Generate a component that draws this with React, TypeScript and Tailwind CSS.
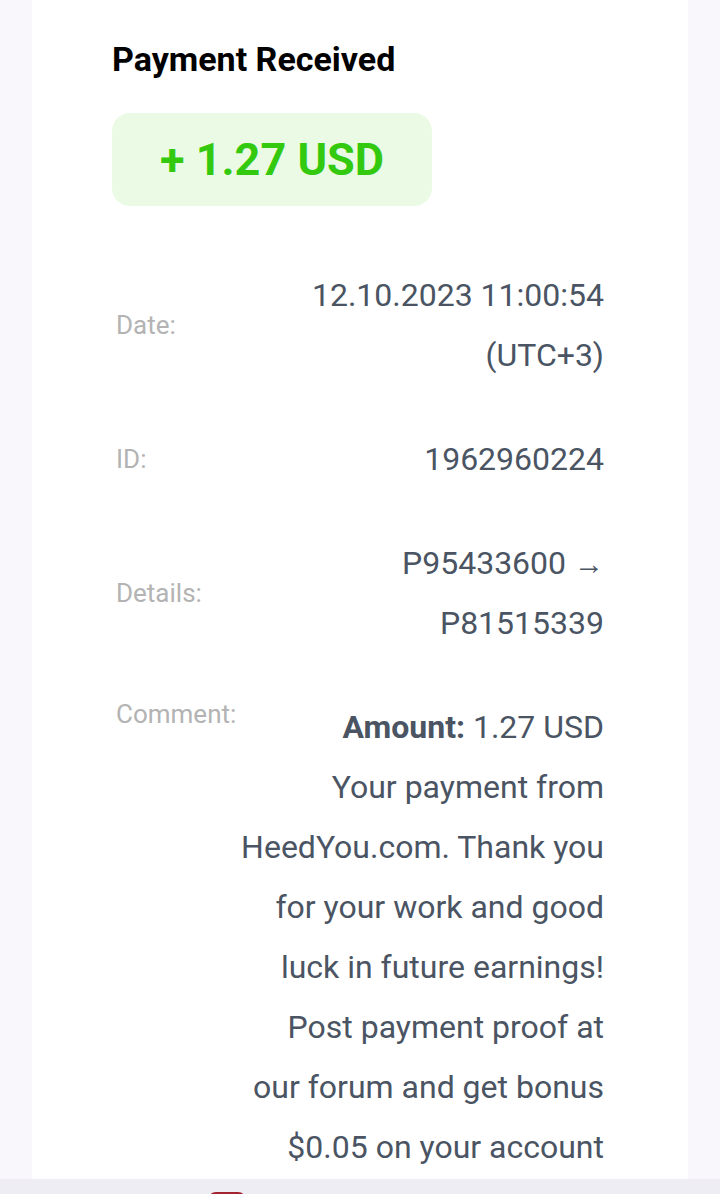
import React from 'react';

interface RowProps {
  label: string;
  children: React.ReactNode;
  top?: boolean;
}

function InfoRow({ label, children, top }: RowProps) {
  return (
    <div className={`flex justify-between ${top ? 'items-start' : 'items-center'}`}>
      <div className="pl-1 text-[26px] leading-[34px] text-[#b3b3b3] shrink-0">{label}</div>
      <div className="text-right text-[32px] leading-[60px] text-[#4a5463]">{children}</div>
    </div>
  );
}

export default function App() {
  return (
    <div
      className="min-h-screen bg-[#f9f7fb] flex flex-col"
      style={{ fontFamily: 'Roboto, "Noto Sans", sans-serif' }}
    >
      <div className="mx-[32px] bg-white pl-[80px] pr-[84px] pt-[39px] pb-[2px]">
        <h1 className="text-[34px] leading-[40px] font-bold text-black">Payment Received</h1>

        <div className="mt-[34px] w-[320px] h-[93px] rounded-[18px] bg-[#eafae4] flex items-center justify-center">
          <span className="text-[45px] leading-none font-bold text-[#33c90f]">+ 1.27 USD</span>
        </div>

        <div className="mt-[59px] flex flex-col gap-[44px]">
          <InfoRow label="Date:">
            12.10.2023 11:00:54
            <br />
            (UTC+3)
          </InfoRow>
          <InfoRow label="ID:">1962960224</InfoRow>
          <InfoRow label="Details:">
            P95433600 <span className="text-[30px] leading-none">→</span>
            <br />
            P81515339
          </InfoRow>
          <InfoRow label="Comment:" top>
            <span className="font-bold">Amount:</span> 1.27 USD
            <br />
            Your payment from
            <br />
            HeedYou.com. Thank you
            <br />
            for your work and good
            <br />
            luck in future earnings!
            <br />
            Post payment proof at
            <br />
            our forum and get bonus
            <br />
            $0.05 on your account
          </InfoRow>
        </div>
      </div>

      <div className="h-[80px] bg-[#efedf4] pl-[208px] pt-[13px]">
        <div className="w-[38px] h-[30px] rounded-[8px] bg-[#a3232f]" />
      </div>
    </div>
  );
}
